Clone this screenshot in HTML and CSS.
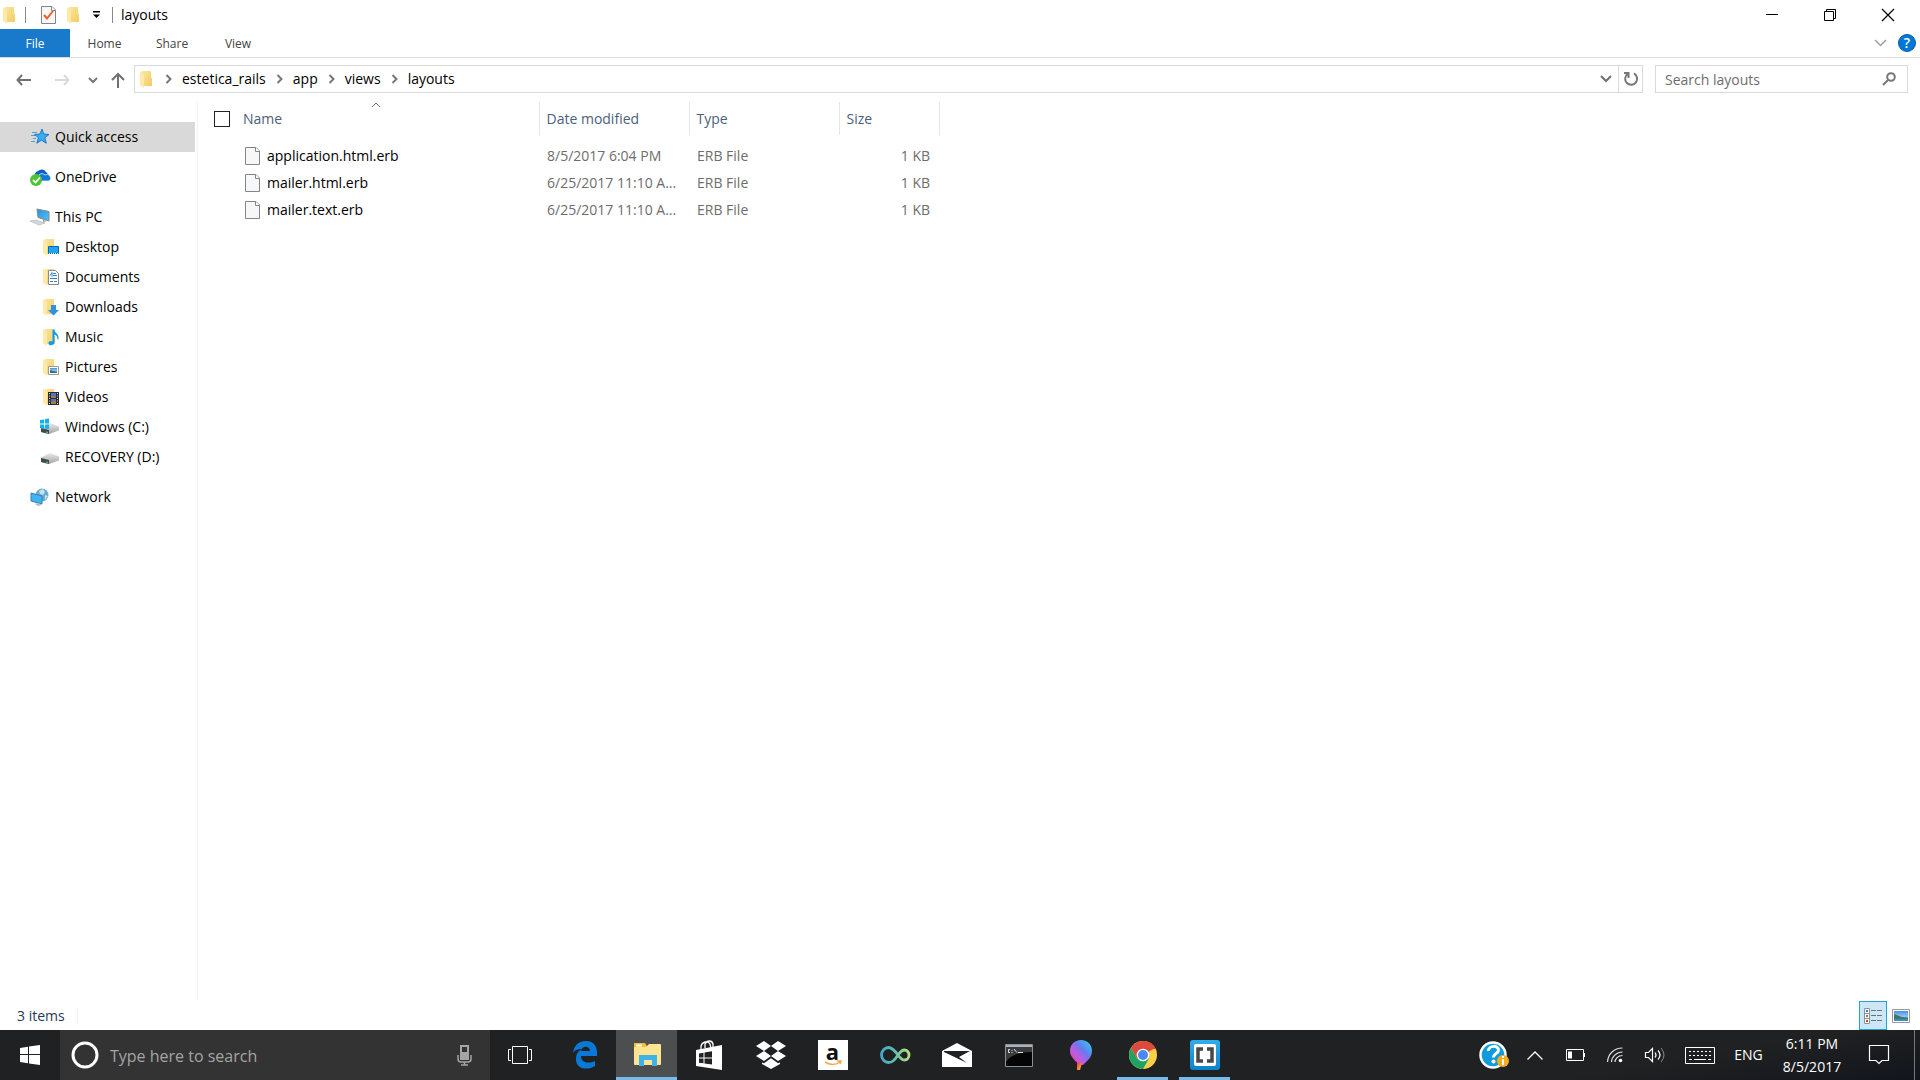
FILE: index.html
```html
<!DOCTYPE html>
<html lang="en">
<head>
<meta charset="utf-8">
<title>layouts</title>
<link rel="stylesheet" href="styles.css">
</head>
<body>
<svg class="defs" aria-hidden="true">
  <defs>
    <linearGradient id="gold" x1="0" x2="1" y1="0" y2="1"><stop offset="0" stop-color="#fae69c"/><stop offset="1" stop-color="#f3cc62"/></linearGradient>
    <linearGradient id="drive" x1="0" x2="0" y1="0" y2="1"><stop offset="0" stop-color="#e8e8e8"/><stop offset="1" stop-color="#a5a5a8"/></linearGradient>
    <linearGradient id="screen" x1="0" x2="1" y1="0" y2="1"><stop offset="0" stop-color="#2a8fd8"/><stop offset="1" stop-color="#55c0fa"/></linearGradient>
    <linearGradient id="sky" x1="0" x2="0" y1="0" y2="1"><stop offset="0" stop-color="#4a90e8"/><stop offset="1" stop-color="#d4ecfa"/></linearGradient>
    <linearGradient id="loop" x1="0" x2="1"><stop offset="0" stop-color="#44a8c8"/><stop offset=".5" stop-color="#5fbfae"/><stop offset="1" stop-color="#b4e07c"/></linearGradient>
    <linearGradient id="balloon" x1="0" x2="1" y1="1" y2="0"><stop offset="0" stop-color="#f0408c"/><stop offset=".35" stop-color="#c05be0"/><stop offset=".6" stop-color="#6a78f0"/><stop offset="1" stop-color="#20e0f0"/></linearGradient>
    <linearGradient id="string" x1="0" x2="1" y1="0" y2="1"><stop offset="0" stop-color="#e83c50"/><stop offset="1" stop-color="#ffc828"/></linearGradient>
    <linearGradient id="bracket" x1="0" x2="0" y1="0" y2="1"><stop offset="0" stop-color="#30aeea"/><stop offset="1" stop-color="#0b82cc"/></linearGradient>
    <symbol id="folder" viewBox="0 0 13 18"><path d="M3 1h9v7h1v8H3z" fill="url(#gold)"/><path d="M1 1l4 3v14l-4-3z" fill="#fde9ab"/></symbol>
    <symbol id="page" viewBox="0 0 15 18"><path d="M.5.500h10.500l3.500 3.500v13.500H.5z" fill="#f5f7f8" stroke="#858585"/><path d="M10.500.5v4h4" fill="#fff" stroke="#858585"/></symbol>
    <symbol id="next" viewBox="0 0 7 10"><path d="M1.500 1l4 4-4 4" fill="none" stroke="#777" stroke-width="2"/></symbol>
    <symbol id="hdd" viewBox="0 0 20 16"><path d="M1 8.500l9-4.500 9 3.500v4L9 15l-8-2z" fill="url(#drive)"/><path d="M1 9l8 2v4l-8-2z" fill="#45484a"/><path d="M6 12.500l2 .5v1l-2-.5z" fill="#4be27c"/></symbol>
  </defs>
</svg>

<header class="titlebar">
  <svg class="folder" width="13" height="18"><use href="#folder"/></svg>
  <i class="rule rule-first"></i>
  <button class="quick" aria-label="Properties"><svg width="15" height="18" viewBox="0 0 15 18"><use href="#page" width="15" height="18"/><path d="M3 9l3 3.500L12 5" fill="none" stroke="#f15a22" stroke-width="2"/></svg></button>
  <button class="quick" aria-label="New folder"><svg width="13" height="18"><use href="#folder"/></svg></button>
  <button class="quick" aria-label="Customize toolbar"><svg width="9" height="7" viewBox="0 0 9 7"><path d="M1 0h7v1.500H1zM1 3.500h7L4.500 7z"/></svg></button>
  <i class="rule"></i>
  <h1 class="title">layouts</h1>
  <div class="window-buttons">
    <button aria-label="Minimize"><svg width="12" height="12"><path d="M0 5.500h12" stroke="#000"/></svg></button>
    <button aria-label="Restore"><svg width="12" height="12"><path d="M.5 2.500h9v9h-9zM2.500 2.500v-2h9v9h-2" fill="none" stroke="#000"/></svg></button>
    <button aria-label="Close"><svg width="12" height="12"><path d="M0 0l12 12M12 0L0 12" stroke="#000" stroke-width="1.200"/></svg></button>
  </div>
</header>

<nav class="ribbon" aria-label="Ribbon">
  <button class="tab tab-file">File</button>
  <button class="tab tab-home">Home</button>
  <button class="tab">Share</button>
  <button class="tab">View</button>
  <div class="ribbon-end">
    <button aria-label="Expand ribbon"><svg width="13" height="8" viewBox="0 0 13 8"><path d="M1 1l5.500 5.500L12 1" fill="none" stroke="#a0a0a0" stroke-width="1.500"/></svg></button>
    <button class="help" aria-label="Help">?</button>
  </div>
</nav>

<div class="address-row">
  <button class="nav-btn" aria-label="Back"><svg width="16" height="12" viewBox="0 0 16 12"><path d="M6 1L1.500 6 6 11M1.500 6H15" fill="none" stroke="#707070" stroke-width="2"/></svg></button>
  <button class="nav-btn" aria-label="Forward" disabled><svg width="16" height="12" viewBox="0 0 16 12"><path d="M10 1l4.500 5-4.500 5M14.500 6H1" fill="none" stroke="#dadada" stroke-width="2"/></svg></button>
  <button class="nav-btn nav-small" aria-label="Recent locations"><svg width="10" height="7" viewBox="0 0 10 7"><path d="M1 1l4 4 4-4" fill="none" stroke="#777" stroke-width="2"/></svg></button>
  <button class="nav-btn nav-up" aria-label="Up"><svg width="14" height="16" viewBox="0 0 14 16"><path d="M1 8l6-6 6 6M7 2v14" fill="none" stroke="#707070" stroke-width="2"/></svg></button>
  <div class="address">
    <svg class="folder" width="13" height="18"><use href="#folder"/></svg>
    <svg width="7" height="10"><use href="#next"/></svg><a href="#estetica_rails">estetica_rails</a>
    <svg width="7" height="10"><use href="#next"/></svg><a href="#app">app</a>
    <svg width="7" height="10"><use href="#next"/></svg><a href="#views">views</a>
    <svg width="7" height="10"><use href="#next"/></svg><a href="#layouts">layouts</a>
    <button class="address-drop" aria-label="Previous locations"><svg width="12" height="8" viewBox="0 0 12 8"><path d="M1 1l5 5 5-5" fill="none" stroke="#707070" stroke-width="2"/></svg></button>
    <button class="refresh" aria-label="Refresh"><svg width="16" height="16" viewBox="0 0 16 16"><path d="M4.500 3A6 6 0 1 0 11 2.500M1 2h4.500v5" fill="none" stroke="#777" stroke-width="2"/></svg></button>
  </div>
  <label class="search">
    <input type="search" placeholder="Search layouts" aria-label="Search layouts">
    <svg width="14" height="14" viewBox="0 0 14 14"><circle cx="9" cy="5" r="3.800" fill="none" stroke="#777" stroke-width="2"/><path d="M6 8l-5 5" stroke="#777" stroke-width="2"/></svg>
  </label>
</div>

<main class="main">
  <nav class="tree" aria-label="Folders">
    <a class="node selected" href="#quick"><svg width="20" height="18" viewBox="0 0 20 18"><path d="M12 1l1.700 5 5.300.500-4.200 3.200 1.500 5.500-4.800-3-4.700 3 1.700-5.500L4.500 6.500l5.500-.5z" fill="#3cabef" stroke="#187cc4"/><path d="M2 4.500h5M1 7.500h4M3 10.500h3M1 13.500h4" stroke="#4d9fd4"/></svg>Quick access</a>
    <a class="node" href="#onedrive"><svg width="20" height="18" viewBox="0 0 20 18"><path d="M5 8a4 4 0 0 1 3-5 5 5 0 0 1 8 1 4 4 0 0 1 0 7H6z" fill="#0c5fc4"/><path d="M8 13V9a4 4 0 0 1 7-2 3 3 0 0 1 4 6z" fill="#1178dc" stroke="#fff" stroke-width=".7"/><circle cx="6" cy="12" r="6" fill="#4cc435"/><path d="M3 12l2.500 2.500L10 9.500" fill="none" stroke="#fff" stroke-width="1.700"/></svg>OneDrive</a>
    <div class="branch">
      <a class="node" href="#pc"><svg width="20" height="18" viewBox="0 0 20 18"><path d="M7 1l12 2.500v9.500L8 9.500z" fill="url(#screen)" stroke="#7e8b94"/><path d="M0 13l6-1 9 3-6 2z" fill="#d4d7dc" stroke="#b6bac0" stroke-width=".7"/><path d="M13 12l4 1-4 1z" fill="#8d969e"/></svg>This PC</a>
      <a class="node child" href="#desktop"><svg width="18" height="18" viewBox="0 0 18 18"><use href="#folder" width="13" height="18"/><path d="M6.500 8.500h10v7h-10z" fill="#1ba4f5" stroke="#0967ae"/><path d="M7 15.500h9" stroke="#fff" stroke-dasharray="1 1"/></svg>Desktop</a>
      <a class="node child" href="#documents"><svg width="18" height="18" viewBox="0 0 18 18"><use href="#folder" width="13" height="18"/><path d="M6.500 2.500h7l3 3v11h-10z" fill="#fff" stroke="#8a8a8a"/><path d="M8 7.500l2-3v4M11 5.500h3M11 7.500h4M8 10.500h7M8 13.500h3M12 13.500h3" fill="none" stroke="#3284c4"/></svg>Documents</a>
      <a class="node child" href="#downloads"><svg width="18" height="18" viewBox="0 0 18 18"><use href="#folder" width="13" height="18"/><path d="M9 7h5v5h3l-5.500 5.500L6 12h3z" fill="#2f8fe0"/></svg>Downloads</a>
      <a class="node child" href="#music"><svg width="18" height="18" viewBox="0 0 18 18"><use href="#folder" width="13" height="18"/><path d="M10.500 1.500h2c0 4 5 4 4 10h-1c0-3-1-4-3-5v8c0 3-6 4-6 1s3-3 4-2z" fill="#109af0"/></svg>Music</a>
      <a class="node child" href="#pictures"><svg width="18" height="18" viewBox="0 0 18 18"><use href="#folder" width="13" height="18"/><path d="M6.500 8.500h10v8h-10z" fill="#fff" stroke="#999"/><path d="M8 10h7v5H8z" fill="url(#sky)"/><path d="M8 12l3 1 4 .5V15H8z" fill="#38765b"/></svg>Pictures</a>
      <a class="node child" href="#videos"><svg width="18" height="18" viewBox="0 0 18 18"><use href="#folder" width="13" height="18"/><path d="M6 4h11v13H6z" fill="#2b2b33"/><path d="M7.500 5v12M15.500 5v12" stroke="#ddd" stroke-dasharray="1 1.500"/><path d="M9 5h5v5H9zM9 11h5v5H9z" fill="#4d78c4"/><path d="M9 8l5 1v1H9zM9 14l5-1v3H9z" fill="#b57832"/></svg>Videos</a>
      <a class="node child drive" href="#c"><svg width="20" height="16" viewBox="0 0 20 16"><use href="#hdd" width="20" height="16"/><path d="M0 1l4-.5v4H0zM5 0l4-.5v5H5zM0 5.500h4v4L0 9zM5 5.500h4v4.500l-4-.5z" fill="#0cb4f0"/></svg>Windows (C:)</a>
      <a class="node child drive" href="#d"><svg width="20" height="16"><use href="#hdd"/></svg>RECOVERY (D:)</a>
    </div>
    <a class="node" href="#network"><svg width="20" height="18" viewBox="0 0 20 18"><circle cx="12" cy="7" r="6.500" fill="#6aacce"/><path d="M9 3l4-2 2 3-2 3-3-1zM15 7l3 1-3 4z" fill="#c4e3ee"/><path d="M1 5l11 3v8L1 13z" fill="#3eb4f4" stroke="#3d7fa8"/><path d="M5 16l3-1 4 2-4 1z" fill="#b7bdc2"/></svg>Network</a>
  </nav>

  <section class="files">
    <table>
      <colgroup><col class="col-check"><col class="col-name"><col class="col-date"><col class="col-type"><col class="col-size"></colgroup>
      <thead>
        <tr><th class="check"><input type="checkbox" aria-label="Select all"></th><th class="name">Name<svg class="sort" width="10" height="6" viewBox="0 0 10 6"><path d="M1 5l4-4 4 4" fill="none" stroke="#666"/></svg></th><th>Date modified</th><th>Type</th><th>Size</th></tr>
      </thead>
      <tbody>
        <tr><td></td><td class="name"><svg width="15" height="18"><use href="#page"/></svg>application.html.erb</td><td>8/5/2017 6:04 PM</td><td>ERB File</td><td class="size">1 KB</td></tr>
        <tr><td></td><td class="name"><svg width="15" height="18"><use href="#page"/></svg>mailer.html.erb</td><td>6/25/2017 11:10 A...</td><td>ERB File</td><td class="size">1 KB</td></tr>
        <tr><td></td><td class="name"><svg width="15" height="18"><use href="#page"/></svg>mailer.text.erb</td><td>6/25/2017 11:10 A...</td><td>ERB File</td><td class="size">1 KB</td></tr>
      </tbody>
    </table>
  </section>
</main>

<footer class="status">
  <span class="count">3 items</span>
  <div class="views">
    <button class="view active" aria-label="Details view"><svg width="20" height="18" viewBox="0 0 20 18"><path d="M1.500 1.500h5v15h-5zM1.500 6.500h5M1.500 11.500h5" fill="#fff" stroke="#8a9298"/><path d="M3 3h2v2H3z" fill="#2f7dd0"/><path d="M3 8h2v2H3z" fill="#7d8a2c"/><path d="M3 13h2v2H3z" fill="#d0452c"/><path d="M8 3.500h5M14 3.500h5M8 8.500h5M14 8.500h5M8 13.500h5M14 13.500h5" stroke="#6b7378"/></svg></button>
    <button class="view" aria-label="Large icons"><svg width="18" height="14" viewBox="0 0 18 14"><path d="M.5.500h17v13H.5z" fill="#fff" stroke="#999"/><path d="M2 2h14v10H2z" fill="url(#sky)"/><path d="M2 5l8 3 6 .5V10H2z" fill="#3d7a5c"/><path d="M2 10h14v2H2z" fill="#3a8dcc"/></svg></button>
  </div>
</footer>

<div class="taskbar">
  <button class="start" aria-label="Start"><svg width="20" height="20" viewBox="0 0 20 20"><path d="M0 3l8-1.200V9H0zM9 1.600L20 0v9H9zM0 10h8v8.200L0 17zM9 10h11v10L9 18.400z" fill="#fff"/></svg></button>
  <label class="cortana">
    <svg width="28" height="28" viewBox="0 0 28 28"><circle cx="14" cy="14" r="12" fill="none" stroke="#fff" stroke-width="3"/></svg>
    <input type="text" placeholder="Type here to search" aria-label="Type here to search">
    <svg width="15" height="21" viewBox="0 0 15 21"><path d="M3 0h9v15H3z" fill="#a5a5a5"/><path d="M5 2h5v5H5z" fill="#333"/><path d="M1 10v4q0 3 3 3h7q3 0 3-3v-4M7.500 17v3M4 20h7" fill="none" stroke="#a5a5a5" stroke-width="1.500"/></svg>
  </label>
  <div class="apps">
    <button class="app task-view" aria-label="Task view"><svg width="24" height="18" viewBox="0 0 24 18"><path d="M4.500.5h15v17h-15zM3 3.500H.5v11H3M21 3.500h2.500v11H21" fill="none" stroke="#fff"/></svg></button>
    <button class="app" aria-label="Edge"><svg width="26" height="28" viewBox="0 0 26 28"><path d="M1 12C2 4 7 0 14 0c8 0 12 6 11 15H9c0 7 8 8 14 5v5c-8 5-20 3-19-8 0-4 2-7 6-9-5 0-8 2-9 4zm8-2h9c0-5-8-6-9 0z" fill="#0a78d7" fill-rule="evenodd"/></svg></button>
    <button class="app current" aria-label="File Explorer"><svg width="28" height="24" viewBox="0 0 28 24"><path d="M1 0h11l2 3v4H1z" fill="#f5bd32"/><path d="M3 1.500h6v2H3z" fill="#fff"/><path d="M1 4h12l3-3h11q1 0 1 1v19q0 1-1 1H2q-1 0-1-1z" fill="#ffe491"/><path d="M6 12h18v11h-5v-6h-8v6H6z" fill="#3cb4e8"/></svg></button>
    <button class="app" aria-label="Store"><svg width="26" height="30" viewBox="0 0 26 30"><path d="M0 10l26-5v25L0 26z" fill="#fff"/><path d="M5 10V6c1-4 7-6 9-2l1 4M9 8V4c2-4 7-4 8 0v4" fill="none" stroke="#fff" stroke-width="1.300"/><path d="M3 13.500l4.500-.8v4.800H3zM8.500 12.500l7.500-1.300v6.300H8.500zM3 18.500h4.500v4.800L3 22.800zM8.500 18.500H16v6l-7.500-1z" fill="#222"/></svg></button>
    <button class="app" aria-label="Dropbox"><svg width="30" height="28" viewBox="0 0 30 28"><path d="M8 0l7 5-7 5-8-5zM22 0l8 5-8 5-7-5zM8 10l7 5-7 5-8-5zM22 10l8 5-8 5-7-5zM6 21.500l2 .8 7-5 7 5 2-.8V23l-9 5-9-5z" fill="#fff"/></svg></button>
    <button class="app" aria-label="Amazon"><span class="amazon">a<svg width="18" height="5" viewBox="0 0 18 5"><path d="M1 0q8 5 15 0M13-1h4l-1 3" fill="none" stroke="#f7a94a" stroke-width="1.500"/></svg></span></button>
    <button class="app" aria-label="Infinity"><svg width="30" height="18" viewBox="0 0 30 18"><path d="M18 9C14 15 12 16.500 8.500 16.500a7 7.500 0 0 1 0-15C12 1.500 15 5 18 9c3 4 4 5 6.500 5a4.500 5 0 0 0 0-10C22 4 21 5 18 9z" fill="none" stroke="url(#loop)" stroke-width="2.800"/></svg></button>
    <button class="app" aria-label="Mail"><svg width="30" height="24" viewBox="0 0 30 24"><path d="M0 8l15-8 15 8v16H0z" fill="#fff"/><path d="M2 8h26l-11 6 8 6L2 9z" fill="#202122"/></svg></button>
    <button class="app" aria-label="Command prompt"><svg width="28" height="23" viewBox="0 0 28 23"><path d="M.5.500h27v22H.5z" fill="#050505" stroke="#8b9299"/><path d="M1 1h26v2H1z" fill="#a9b2b9"/><path d="M1 3h26v5C15 8 5 11 1 18z" fill="#393b3d"/><path d="M5 5.500H3.500v3H5M7 6v1M7 8v1M9 5l3 3.500M13 8.500h5" fill="none" stroke="#ddd"/></svg></button>
    <button class="app" aria-label="Paint 3D"><svg width="22" height="30" viewBox="0 0 22 30"><path d="M11 0c7 0 11 5 11 11 0 7-6 11-9 14H9C6 21 0 17 0 11 0 5 4 0 11 0z" fill="url(#balloon)"/><path d="M7 23h5l-2 7H7z" fill="url(#string)"/></svg></button>
    <button class="app running" aria-label="Chrome"><svg width="28" height="28" viewBox="0 0 28 28"><circle cx="14" cy="14" r="14" fill="#fccf48"/><path d="M14 14L26.100 7A14 14 0 0 0 1.900 7L8 17.500z" fill="#db4a3d"/><path d="M14 8h12.700A14 14 0 0 0 14 0z" fill="#db4a3d"/><path d="M1.900 7A14 14 0 0 0 14 28l6-10.500H8z" fill="#1da362"/><circle cx="14" cy="14" r="6.300" fill="#fff"/><circle cx="14" cy="14" r="5" fill="#4a88f4"/></svg></button>
    <button class="app running" aria-label="Brackets"><svg width="30" height="30" viewBox="0 0 30 30"><rect width="30" height="30" rx="3" fill="url(#bracket)"/><rect x="4" y="4" width="22" height="22" rx="2" fill="#fff"/><path d="M13 9H8v12h5M17 9h5v12h-5" fill="none" stroke="#484848" stroke-width="3.500"/></svg></button>
  </div>
  <div class="tray">
    <button class="tray-help" aria-label="Support"><svg width="30" height="28" viewBox="0 0 30 28"><circle cx="13" cy="14" r="12.500" fill="#129bdc" stroke="#fff" stroke-width="2.500"/><path d="M8.500 10c0-6 10-6 10-1 0 4-5 3-5 7.500" fill="none" stroke="#fff" stroke-width="3"/><circle cx="13.500" cy="20.500" r="2" fill="#fff"/><circle cx="23" cy="20" r="6" fill="#f6ae20"/><path d="M23 18v6M23 15v2" stroke="#fff" stroke-width="2"/></svg></button>
    <button class="tray-icon" aria-label="Hidden icons"><svg width="16" height="9" viewBox="0 0 16 9"><path d="M.5 8.500L8 1l7.500 7.500" fill="none" stroke="#fff" stroke-width="1.300"/></svg></button>
    <button class="tray-icon" aria-label="Battery"><svg width="19" height="12" viewBox="0 0 19 12"><path d="M.5.500h17v11H.5z" fill="none" stroke="#fff"/><path d="M2 2.500h4v7H2zM18 4h1v4h-1z" fill="#fff"/></svg></button>
    <button class="tray-icon" aria-label="Wi-Fi"><svg width="16" height="16" viewBox="0 0 16 16"><path d="M.5 15C1 7 7 1 15.500 1M4.500 15c0-5 5-10 11-10M8 15c0-3 3-6.500 7.500-6.500" fill="none" stroke="#ddd" stroke-width="1.200"/><circle cx="13.500" cy="13.500" r="1.800" fill="#fff"/></svg></button>
    <button class="tray-icon" aria-label="Volume"><svg width="21" height="18" viewBox="0 0 21 18"><path d="M.5 6.500h3l4-4v13l-4-4h-3zM10 6.500q2 2.500 0 5M13 4.500q4 4.500 0 9" fill="none" stroke="#fff" stroke-width="1.200"/><path d="M16 2q6 7 0 14" fill="none" stroke="#888"/></svg></button>
    <button class="tray-keyboard" aria-label="Touch keyboard"><svg width="30" height="17" viewBox="0 0 30 17"><path d="M.5.500h29v16H.5z" fill="none" stroke="#fff"/><path d="M4 4.500h23M4 8.500h23" stroke="#fff" stroke-dasharray="2 2"/><path d="M4 12.500h3M9 12.500h12M23 12.500h3" stroke="#fff"/></svg></button>
    <button class="tray-lang">ENG</button>
    <button class="tray-clock"><span>6:11 PM</span><span>8/5/2017</span></button>
    <button class="tray-note" aria-label="Notifications"><svg width="20" height="20" viewBox="0 0 20 20"><path d="M.5.500h19v15H13l-3 3-3-3H.5z" fill="none" stroke="#fff" stroke-width="1.200"/></svg></button>
  </div>
</div>
</body>
</html>
```
FILE: styles.css
```css
* { box-sizing: border-box; }

body {
  margin: 0;
  min-height: 100vh;
  display: flex;
  flex-direction: column;
  background: #fff;
  color: #000;
  font: 14px/20px "Open Sans", "Noto Sans", sans-serif;
}

button, input { font: inherit; color: inherit; }
button { padding: 0; border: 0; background: none; display: flex; align-items: center; justify-content: center; }
a { color: inherit; text-decoration: none; }
svg { display: block; flex: none; overflow: visible; }
.defs { position: absolute; width: 0; height: 0; }

/* Title bar */
.titlebar { display: flex; align-items: center; height: 29px; padding-left: 2px; }
.rule { width: 1px; height: 16px; background: #8a8a8a; }
.rule-first { margin: 0 10px; }
.quick { width: 24px; height: 24px; }
.quick + .rule { margin-left: 4px; }
.title { margin: 0 0 0 8px; font-size: 14px; font-weight: 400; }
.window-buttons { display: flex; margin-left: auto; padding-right: 3px; }
.window-buttons button { width: 58px; height: 28px; }

/* Ribbon */
.ribbon { display: flex; height: 29px; border-bottom: 1px solid #dadbdc; font-size: 12px; color: #444; }
.tab { width: 66px; height: 28px; padding-top: 2px; }
.tab-file { width: 70px; background: #1979ca; color: #fff; }
.tab-home { width: 69px; }
.ribbon-end { display: flex; align-items: center; gap: 11px; margin-left: auto; padding-right: 4px; }
.help { width: 18px; height: 18px; border: 1px solid #0a5ea8; border-radius: 50%; background: #0078d7; color: #fff; font-size: 14px; font-weight: 600; }

/* Address row */
.address-row { display: flex; padding: 7px 12px 9px 5px; }
.nav-btn { width: 38px; height: 28px; padding-top: 2px; }
.nav-small { width: 23px; }
.nav-up { width: 28px; }
.address { display: flex; align-items: center; gap: 10px; flex: 1; height: 28px; margin-left: 2px; padding-left: 4px; border: 1px solid #d9d9d9; }
.address .folder { margin-right: 3px; }
.address-drop { width: 24px; height: 26px; margin-left: auto; }
.refresh { width: 24px; height: 26px; margin-left: -10px; border-left: 1px solid #d9d9d9; }
.search { display: flex; align-items: center; width: 253px; height: 28px; margin-left: 12px; padding: 0 11px 0 9px; border: 1px solid #d9d9d9; }
.search input { flex: 1; min-width: 0; padding: 2px 0 0; border: 0; outline: 0; background: none; }
.search input::placeholder { color: #6d6d6d; opacity: 1; }

/* Folder tree and file list */
.main { display: flex; flex: 1; }
.tree { width: 198px; padding: 20px 2px 0 0; border-right: 1px solid #f3f3f3; display: flex; flex-direction: column; gap: 10px; }
.node { display: flex; align-items: center; gap: 5px; height: 30px; padding-left: 30px; }
.selected { background: #d9d9d9; }
.child { padding-left: 42px; }
.drive { padding-left: 40px; }

.files table { width: 741px; border-collapse: collapse; table-layout: fixed; }
.col-check { width: 42px; }
.col-name { width: 299px; }
.col-date, .col-type { width: 150px; }
.col-size { width: 100px; }
th { height: 33px; padding: 0 0 0 7px; border-right: 1px solid #e5e5e5; color: #4c607a; font-weight: 400; text-align: left; }
th.check { padding: 0 0 0 16px; border: 0; }
th.name { position: relative; padding-left: 3px; }
.check input { appearance: none; display: block; width: 16px; height: 16px; margin: 0; border: 1px solid #222; background: #fff; }
.sort { position: absolute; top: 0; left: 131px; }
thead::after { content: ""; display: block; height: 7px; }
td { height: 27px; padding: 0 0 0 8px; color: #6d6d6d; white-space: nowrap; }
td.name { display: flex; align-items: center; gap: 7px; padding-left: 5px; color: #000; }
td.size { padding-right: 9px; text-align: right; }

/* Status bar */
.status { display: flex; justify-content: space-between; align-items: flex-end; height: 30px; padding: 0 5px 0 17px; color: #1e395b; }
.count { margin-bottom: 7px; padding-right: 12px; border-right: 1px solid #f3f3f3; line-height: 14px; }
.views { display: flex; align-items: center; }
.view { width: 28px; height: 29px; }
.active { border: 1px solid #26a0da; background: #cce8f6; }

/* Taskbar */
.taskbar { display: flex; height: 50px; background: #202122; color: #fff; }
.start { width: 60px; }
.cortana { display: flex; align-items: center; width: 430px; padding: 0 18px 0 11px; background: #333; }
.cortana input { flex: 1; min-width: 0; padding: 2px 0 0; margin-left: 11px; border: 0; outline: 0; background: none; font-size: 16px; }
.cortana input::placeholder { color: #a5a5a5; opacity: 1; }
.apps { display: flex; gap: 1px; }
.app { position: relative; width: 61px; height: 50px; }
.task-view { width: 60px; margin-right: 3px; }
.current { background: #4d4e50; }
.current::after, .running::after { content: ""; position: absolute; right: 5px; bottom: 0; left: 5px; height: 3px; background: #76b9ed; }
.current::after { right: 0; left: 0; }
.amazon { display: flex; flex-direction: column; align-items: center; width: 30px; height: 30px; background: #fff; color: #111; font-size: 22px; font-weight: 700; line-height: 22px; }
.tray { display: flex; margin-left: auto; padding-right: 5px; background: linear-gradient(170deg, #202122 50%, #12151d 100%); }
.tray button { height: 50px; }
.tray-help { width: 40px; }
.tray-icon { width: 40px; }
.tray-keyboard { width: 50px; }
.tray-lang { width: 47px; }
.tray-clock { flex-direction: column; width: 80px; line-height: 23px; }
.tray .tray-note { width: 63px; padding-right: 9px; border-right: 1px solid #777; }
```
